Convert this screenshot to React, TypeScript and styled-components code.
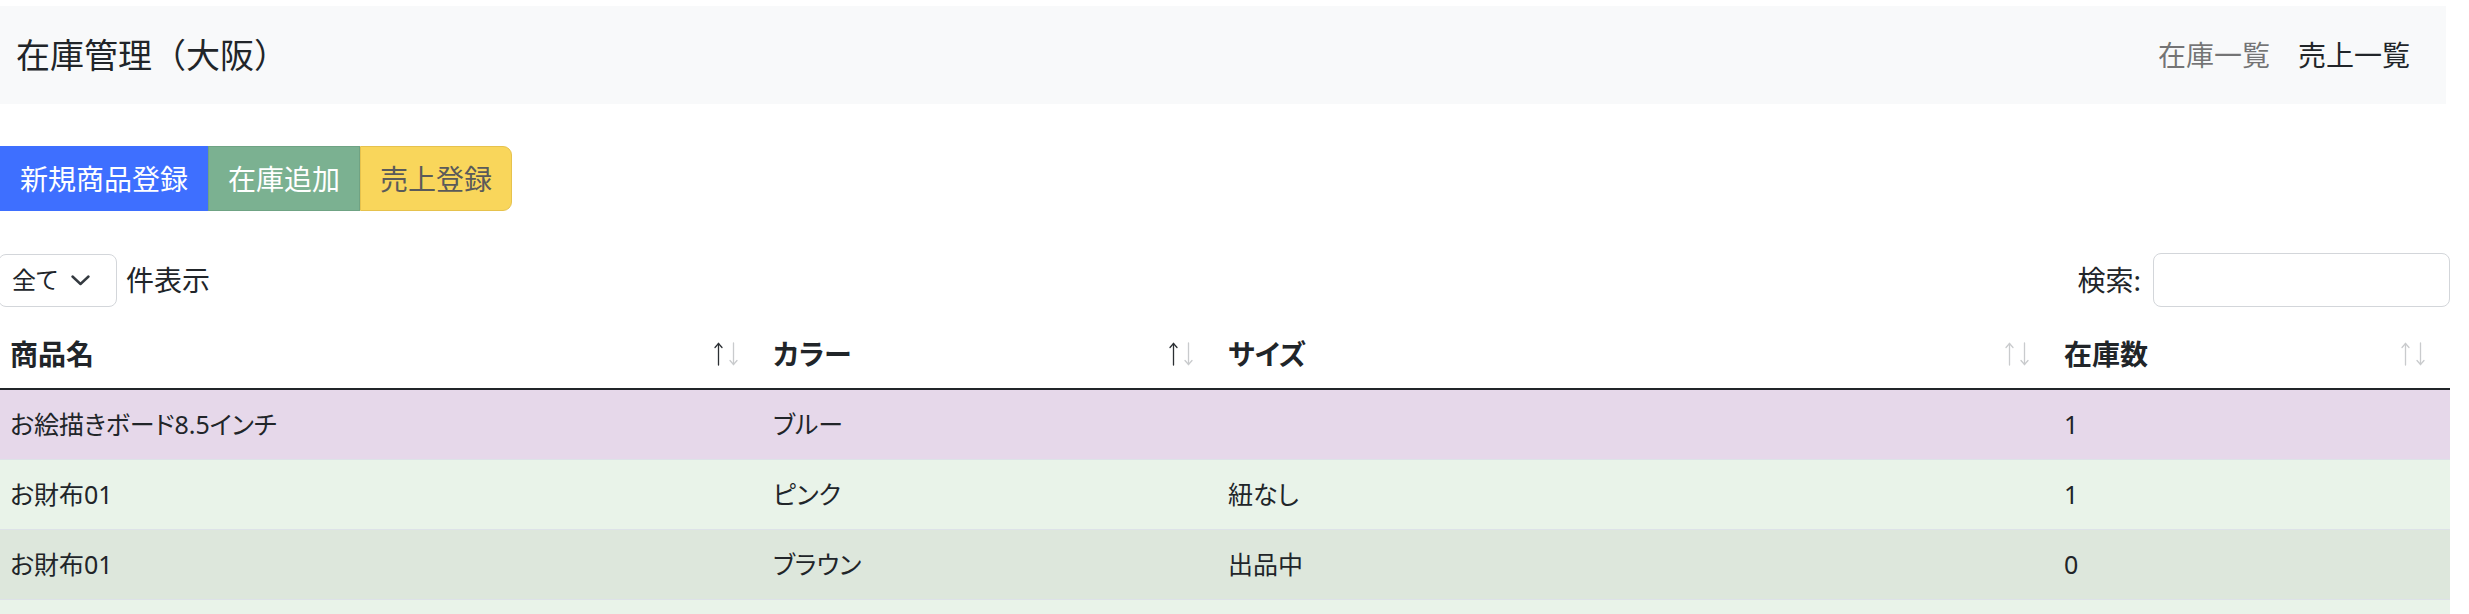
import React from 'react';
import styled, { createGlobalStyle } from 'styled-components';

const GlobalStyle = createGlobalStyle`
  html, body {
    margin: 0;
    padding: 0;
    background: #ffffff;
  }

  body {
    font-family: "Noto Sans", "Noto Sans CJK JP", sans-serif;
    color: #212529;
  }
`;

interface Product {
  name: string;
  color: string;
  size: string;
  stock: number | '';
  tone: 'lavender' | 'green' | 'greenDark';
}

// the 4th row only peeks in at the bottom edge of the frame
const products: Product[] = [
  { name: 'お絵描きボード8.5インチ', color: 'ブルー', size: '', stock: 1, tone: 'lavender' },
  { name: 'お財布01', color: 'ピンク', size: '紐なし', stock: 1, tone: 'green' },
  { name: 'お財布01', color: 'ブラウン', size: '出品中', stock: 0, tone: 'greenDark' },
  { name: '', color: '', size: '', stock: '', tone: 'green' }
];

const toneColors = {
  lavender: '#e6d8ea',
  green: '#e9f3e9',
  greenDark: '#dde7dc'
};

const columns = [
  { key: 'name', label: '商品名', width: 763, active: true },
  { key: 'color', label: 'カラー', width: 455, active: true },
  { key: 'size', label: 'サイズ', width: 836, active: false },
  { key: 'stock', label: '在庫数', width: 396, active: false }
];

const Page = styled.div`
  width: 2450px;
  padding-top: 6px;
`;

const Navbar = styled.nav`
  width: 2446px;
  height: 98px;
  box-sizing: border-box;
  background: #f8f9fa;
  display: flex;
  align-items: center;
  justify-content: space-between;
  padding: 0 22px 0 16px;
`;

const Brand = styled.div`
  font-size: 34px;
  line-height: 1.5;
  color: #212529;
`;

const NavLinks = styled.div`
  display: flex;
  align-items: center;
`;

const NavLink = styled.a<{ $active?: boolean }>`
  font-size: 28px;
  line-height: 1.5;
  padding: 0 14px;
  color: ${(p) => (p.$active ? '#212529' : 'rgba(0, 0, 0, 0.55)')};
  text-decoration: none;
  cursor: pointer;
`;

const ButtonGroup = styled.div`
  display: flex;
  margin-top: 42px;
`;

const ActionButton = styled.button<{ $bg: string; $fg: string; $border: string; $last?: boolean }>`
  height: 65px;
  padding: 0 19px;
  border: 1px solid ${(p) => p.$border};
  background: ${(p) => p.$bg};
  color: ${(p) => p.$fg};
  font-family: inherit;
  font-size: 28px;
  line-height: 1.5;
  border-radius: ${(p) => (p.$last ? '0 9px 9px 0' : '0')};
  cursor: pointer;
`;

const Controls = styled.div`
  display: flex;
  align-items: center;
  justify-content: space-between;
  margin-top: 42px;
  font-feature-settings: "palt";
`;

const LengthControl = styled.label`
  display: flex;
  align-items: center;
  gap: 9px;
  font-size: 28px;
  line-height: 1.5;
  margin-left: -2px;
`;

const SelectBox = styled.div`
  width: 119px;
  height: 53px;
  box-sizing: border-box;
  border: 1px solid #d3d6da;
  border-radius: 8px;
  display: flex;
  align-items: center;
  justify-content: space-between;
  padding: 0 26px 0 13px;
  font-size: 24px;
  color: #212529;
  background: #ffffff;
`;

const SearchControl = styled.label`
  display: flex;
  align-items: center;
  gap: 12px;
  font-size: 28px;
  line-height: 1.5;
`;

const SearchInput = styled.input`
  width: 297px;
  height: 54px;
  box-sizing: border-box;
  border: 1px solid #d3d6da;
  border-radius: 8px;
  font-size: 24px;
  padding: 0 12px;
  outline: none;
`;

const Table = styled.table`
  margin-top: 13px;
  width: 2450px;
  table-layout: fixed;
  border-collapse: collapse;
  font-feature-settings: "palt";
`;

const HeadCell = styled.th`
  height: 68px;
  padding: 0;
  text-align: left;
  border-bottom: 2px solid #212529;
`;

const HeadInner = styled.div`
  display: flex;
  align-items: center;
  justify-content: space-between;
  padding: 0 25px 0 10px;
  font-size: 28px;
  font-weight: 700;
  line-height: 1.5;
`;

const BodyRow = styled.tr<{ $bg: string }>`
  background: ${(p) => p.$bg};
  border-bottom: 1px solid #dde2e8;
`;

const BodyCell = styled.td`
  height: 69px;
  padding: 0 10px;
  font-size: 25px;
  line-height: 1.5;
  vertical-align: middle;
  white-space: nowrap;
`;

function SortIcon ({ active }: { active: boolean }) {
  const up = active ? '#2b2f33' : '#c9cbcd';
  const down = '#c9cbcd';

  return (
    <svg width='24' height='24' viewBox='0 0 24 24' fill='none' strokeWidth='1.3' strokeLinecap='round'>
      <g stroke={up}>
        <line x1='4.5' y1='1.5' x2='4.5' y2='23' />
        <polyline points='1,5.5 4.5,1.5 8,5.5' />
      </g>
      <g stroke={down}>
        <line x1='19.5' y1='1' x2='19.5' y2='22.5' />
        <polyline points='16,18.5 19.5,22.5 23,18.5' />
      </g>
    </svg>
  );
}

function Chevron () {
  return (
    <svg width='19' height='11' viewBox='0 0 19 11' fill='none'>
      <polyline points='1.5,1.5 9.5,9 17.5,1.5' stroke='#343a40' strokeWidth='2.4' strokeLinecap='round' strokeLinejoin='round' />
    </svg>
  );
}

export default function App () {
  return (
    <Page>
      <GlobalStyle />
      <Navbar>
        <Brand>在庫管理（大阪）</Brand>
        <NavLinks>
          <NavLink>在庫一覧</NavLink>
          <NavLink $active>売上一覧</NavLink>
        </NavLinks>
      </Navbar>

      <ButtonGroup>
        <ActionButton $bg='#3e6fff' $fg='#ffffff' $border='#3e6fff'>新規商品登録</ActionButton>
        <ActionButton $bg='#7bb191' $fg='#ffffff' $border='#6fa384'>在庫追加</ActionButton>
        <ActionButton $bg='#f9d65b' $fg='#5a5a5a' $border='#e6c24d' $last>売上登録</ActionButton>
      </ButtonGroup>

      <Controls>
        <LengthControl>
          <SelectBox>
            <span>全て</span>
            <Chevron />
          </SelectBox>
          件表示
        </LengthControl>
        <SearchControl>
          検索:
          <SearchInput type='search' />
        </SearchControl>
      </Controls>

      <Table>
        <colgroup>
          {columns.map((c) => (
            <col key={c.key} style={{ width: c.width }} />
          ))}
        </colgroup>
        <thead>
          <tr>
            {columns.map((c) => (
              <HeadCell key={c.key}>
                <HeadInner>
                  <span>{c.label}</span>
                  <SortIcon active={c.active} />
                </HeadInner>
              </HeadCell>
            ))}
          </tr>
        </thead>
        <tbody>
          {products.map((p, i) => (
            <BodyRow key={i} $bg={toneColors[p.tone]}>
              <BodyCell>{p.name}</BodyCell>
              <BodyCell>{p.color}</BodyCell>
              <BodyCell>{p.size}</BodyCell>
              <BodyCell>{p.stock}</BodyCell>
            </BodyRow>
          ))}
        </tbody>
      </Table>
    </Page>
  );
}
